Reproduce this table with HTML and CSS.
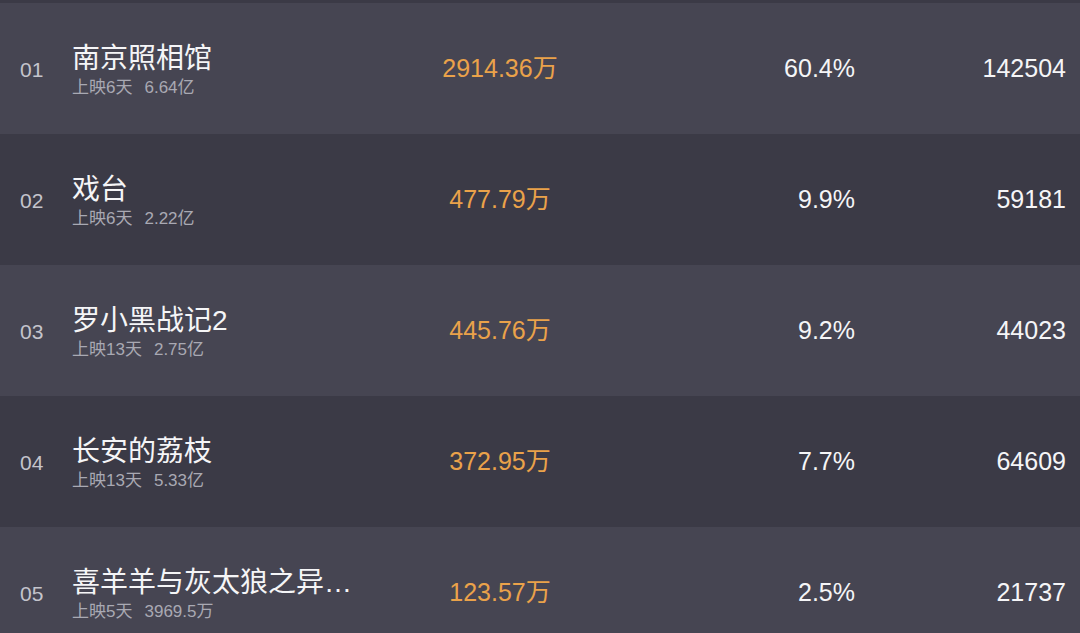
FILE: index.html
```html
<!DOCTYPE html>
<html lang="zh-CN">
<head>
<meta charset="utf-8">
<title>票房排行</title>
<link rel="stylesheet" href="styles.css">
</head>
<body>
<div class="list">
  <div class="row light">
    <div class="rank">01</div>
    <div class="info">
      <div class="title">南京照相馆</div>
      <div class="sub"><span>上映6天</span><span>6.64亿</span></div>
    </div>
    <div class="box">2914.36万</div>
    <div class="pct">60.4%</div>
    <div class="count">142504</div>
  </div>
  <div class="row dark">
    <div class="rank">02</div>
    <div class="info">
      <div class="title">戏台</div>
      <div class="sub"><span>上映6天</span><span>2.22亿</span></div>
    </div>
    <div class="box">477.79万</div>
    <div class="pct">9.9%</div>
    <div class="count">59181</div>
  </div>
  <div class="row light">
    <div class="rank">03</div>
    <div class="info">
      <div class="title">罗小黑战记2</div>
      <div class="sub"><span>上映13天</span><span>2.75亿</span></div>
    </div>
    <div class="box">445.76万</div>
    <div class="pct">9.2%</div>
    <div class="count">44023</div>
  </div>
  <div class="row dark">
    <div class="rank">04</div>
    <div class="info">
      <div class="title">长安的荔枝</div>
      <div class="sub"><span>上映13天</span><span>5.33亿</span></div>
    </div>
    <div class="box">372.95万</div>
    <div class="pct">7.7%</div>
    <div class="count">64609</div>
  </div>
  <div class="row light">
    <div class="rank">05</div>
    <div class="info">
      <div class="title">喜羊羊与灰太狼之异…</div>
      <div class="sub"><span>上映5天</span><span>3969.5万</span></div>
    </div>
    <div class="box">123.57万</div>
    <div class="pct">2.5%</div>
    <div class="count">21737</div>
  </div>
</div>
</body>
</html>
```

FILE: styles.css
```css
html, body {
  margin: 0;
  padding: 0;
}
body {
  width: 1080px;
  height: 633px;
  overflow: hidden;
  background: #3b3a46;
  font-family: "Liberation Sans", "Noto Sans CJK SC", sans-serif;
  padding-top: 3px;
  box-sizing: border-box;
}
.list {
  display: flex;
  flex-direction: column;
}
.row {
  height: 131px;
  display: grid;
  grid-template-columns: 52px 328px 200px 255px 211px;
  align-items: center;
  padding: 0 14px 0 20px;
}
.light { background: #464552; }
.dark { background: #3b3a46; }
.rank {
  font-size: 21px;
  color: #c4c4cc;
  padding-top: 3px;
}
.info {
  display: flex;
  flex-direction: column;
  min-width: 0;
  padding-top: 3px;
}
.title {
  font-size: 28px;
  line-height: 34px;
  color: #f5f5f7;
  white-space: nowrap;
}
.sub {
  display: flex;
  gap: 12px;
  font-size: 17px;
  line-height: 22px;
  color: #a9a9b3;
  margin-top: 1px;
}
.box {
  text-align: center;
  font-size: 25px;
  color: #eaa24a;
  margin-bottom: 6px;
}
.pct, .count {
  text-align: right;
  font-size: 25px;
  color: #f5f5f7;
}
```
